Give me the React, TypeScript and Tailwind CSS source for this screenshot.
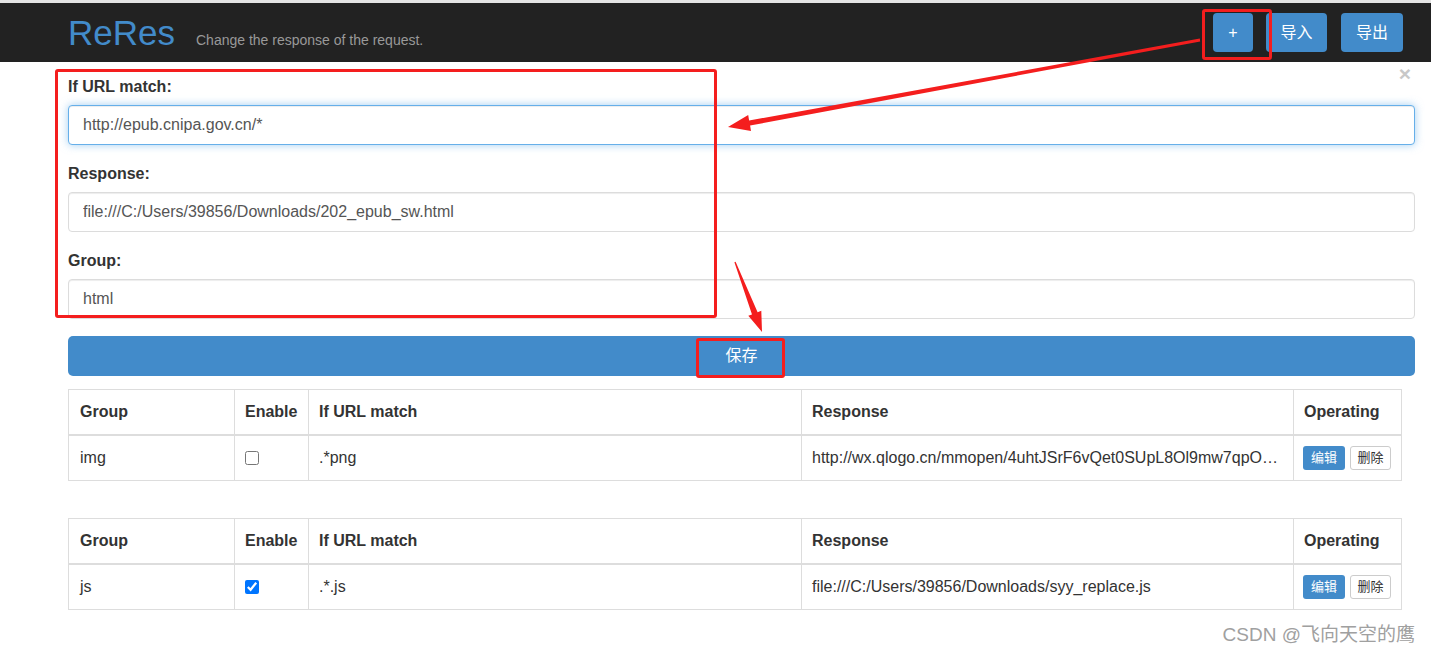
import React from "react";

type Rule = {
  group: string;
  enabled: boolean;
  match: string;
  response: string;
};

const rules: Rule[] = [
  {
    group: "img",
    enabled: false,
    match: ".*png",
    response:
      "http://wx.qlogo.cn/mmopen/4uhtJSrF6vQet0SUpL8Ol9mw7qpOxIbKVQfXtH8aYx0/0",
  },
  {
    group: "js",
    enabled: true,
    match: ".*.js",
    response: "file:///C:/Users/39856/Downloads/syy_replace.js",
  },
];

const font = "font-['Liberation_Sans','Noto_Sans_CJK_SC',sans-serif]";

const Field: React.FC<{ label: string; value: string; focused?: boolean; last?: boolean }> = ({
  label,
  value,
  focused,
  last,
}) => (
  <div className={last ? "mb-[17px]" : "mb-[18px]"}>
    <label className="block text-[16px] leading-[22px] font-bold text-[#333] mb-[7px]">{label}</label>
    <input
      readOnly
      value={value}
      className={
        focused
          ? "block w-full h-[40px] px-[14px] text-[16px] text-[#555] bg-white rounded-[4px] border border-[#66afe9] outline-none shadow-[inset_0_1px_1px_rgba(0,0,0,0.075),0_0_8px_rgba(102,175,233,0.6)]"
          : "block w-full h-[40px] px-[14px] text-[16px] text-[#555] bg-white rounded-[4px] border border-[#dcdcdc] outline-none shadow-[inset_0_1px_1px_rgba(0,0,0,0.075)]"
      }
    />
  </div>
);

const RuleTable: React.FC<{ rule: Rule }> = ({ rule }) => (
  <table className="table-fixed w-[1333px] border-collapse text-[16px] text-[#333]">
    <colgroup>
      <col className="w-[166px]" />
      <col className="w-[74px]" />
      <col className="w-[493px]" />
      <col className="w-[492px]" />
      <col className="w-[108px]" />
    </colgroup>
    <thead>
      <tr>
        {["Group", "Enable", "If URL match", "Response", "Operating"].map((h) => (
          <th
            key={h}
            className="text-left font-bold px-[10px] first:px-[11px] h-[45px] leading-[22px] border border-[#ddd] border-b-2 whitespace-nowrap"
          >
            {h}
          </th>
        ))}
      </tr>
    </thead>
    <tbody>
      <tr>
        <td className="px-[11px] h-[46px] border border-[#ddd]">{rule.group}</td>
        <td className="px-[10px] h-[46px] border border-[#ddd]">
          <input
            type="checkbox"
            readOnly
            checked={rule.enabled}
            className="block w-[14px] h-[14px] accent-[#0075ff]"
          />
        </td>
        <td className="px-[10px] h-[46px] border border-[#ddd]">{rule.match}</td>
        <td className="px-[10px] h-[46px] border border-[#ddd] truncate">{rule.response}</td>
        <td className="px-[9px] h-[46px] border border-[#ddd]">
          <div className="flex gap-[5px]">
            <button className="h-[24px] w-[42px] text-[13px] leading-none text-white bg-[#428bca] rounded-[3px]">
              编辑
            </button>
            <button className="h-[24px] w-[41px] text-[13px] leading-none text-[#333] bg-white border border-[#ccc] rounded-[3px]">
              删除
            </button>
          </div>
        </td>
      </tr>
    </tbody>
  </table>
);

export default function App() {
  return (
    <div className={`relative w-[1431px] h-[653px] bg-white overflow-hidden ${font}`}>
      <div className="h-[3px] bg-[#e4e4e4]" />
      <nav className="h-[59px] bg-[#222] flex items-center pl-[68px] pr-[28px]">
        <div className="flex items-baseline flex-1 pt-[1px]">
          <span className="text-[35px] leading-none text-[#428bca]">ReRes</span>
          <span className="ml-[21px] text-[14px] text-[#999]">Change the response of the request.</span>
        </div>
        <div className="flex items-center gap-[13px]">
          <button className="w-[40px] h-[39px] rounded-[4px] bg-[#428bca] text-white text-[16px]">+</button>
          <button className="w-[61px] h-[39px] rounded-[4px] bg-[#428bca] text-white text-[16px]">导入</button>
          <button className="w-[62px] h-[39px] rounded-[4px] bg-[#428bca] text-white text-[16px] ml-[1px]">
            导出
          </button>
        </div>
      </nav>

      <div className="relative ml-[68px] w-[1347px] pt-[14px]">
        <span className="absolute right-[4px] top-[1px] text-[21px] font-bold leading-[21px] text-[#c8c8c8]">×</span>
        <Field label="If URL match:" value="http://epub.cnipa.gov.cn/*" focused />
        <Field label="Response:" value="file:///C:/Users/39856/Downloads/202_epub_sw.html" />
        <Field label="Group:" value="html" last />
        <button className="block w-full h-[40px] rounded-[5px] bg-[#428bca] text-white text-[16px]">保存</button>
        <div className="mt-[13px] flex flex-col gap-[37px]">
          {rules.map((r) => (
            <RuleTable key={r.group} rule={r} />
          ))}
        </div>
      </div>

      {/* screenshot annotations */}
      <div className="absolute left-[1202px] top-[9px] w-[70px] h-[51px] border-[3px] border-[#f41e1e] rounded-[3px]" />
      <div className="absolute left-[55px] top-[69px] w-[662px] h-[249px] border-[3px] border-[#f41e1e] rounded-[3px]" />
      <div className="absolute left-[696px] top-[338px] w-[89px] h-[40px] border-[3px] border-[#f41e1e] rounded-[3px]" />
      <svg className="absolute left-0 top-0 pointer-events-none" width="1431" height="653">
        <polygon
          fill="#f41e1e"
          points="1199.8,38.6 749.1,120.5 748.2,115.1 728,127 751,130.9 750.1,125.5 1200.2,41.4"
        />
        <polygon
          fill="#f41e1e"
          points="735.6,261.8 757.6,312.2 761.3,310.8 762,332 748.3,315.8 752,314.4 734.4,262.2"
        />
      </svg>

      <div className="absolute right-[16px] top-[621px] text-[19px] text-[#a0a0a0]">CSDN @飞向天空的鹰</div>
    </div>
  );
}
